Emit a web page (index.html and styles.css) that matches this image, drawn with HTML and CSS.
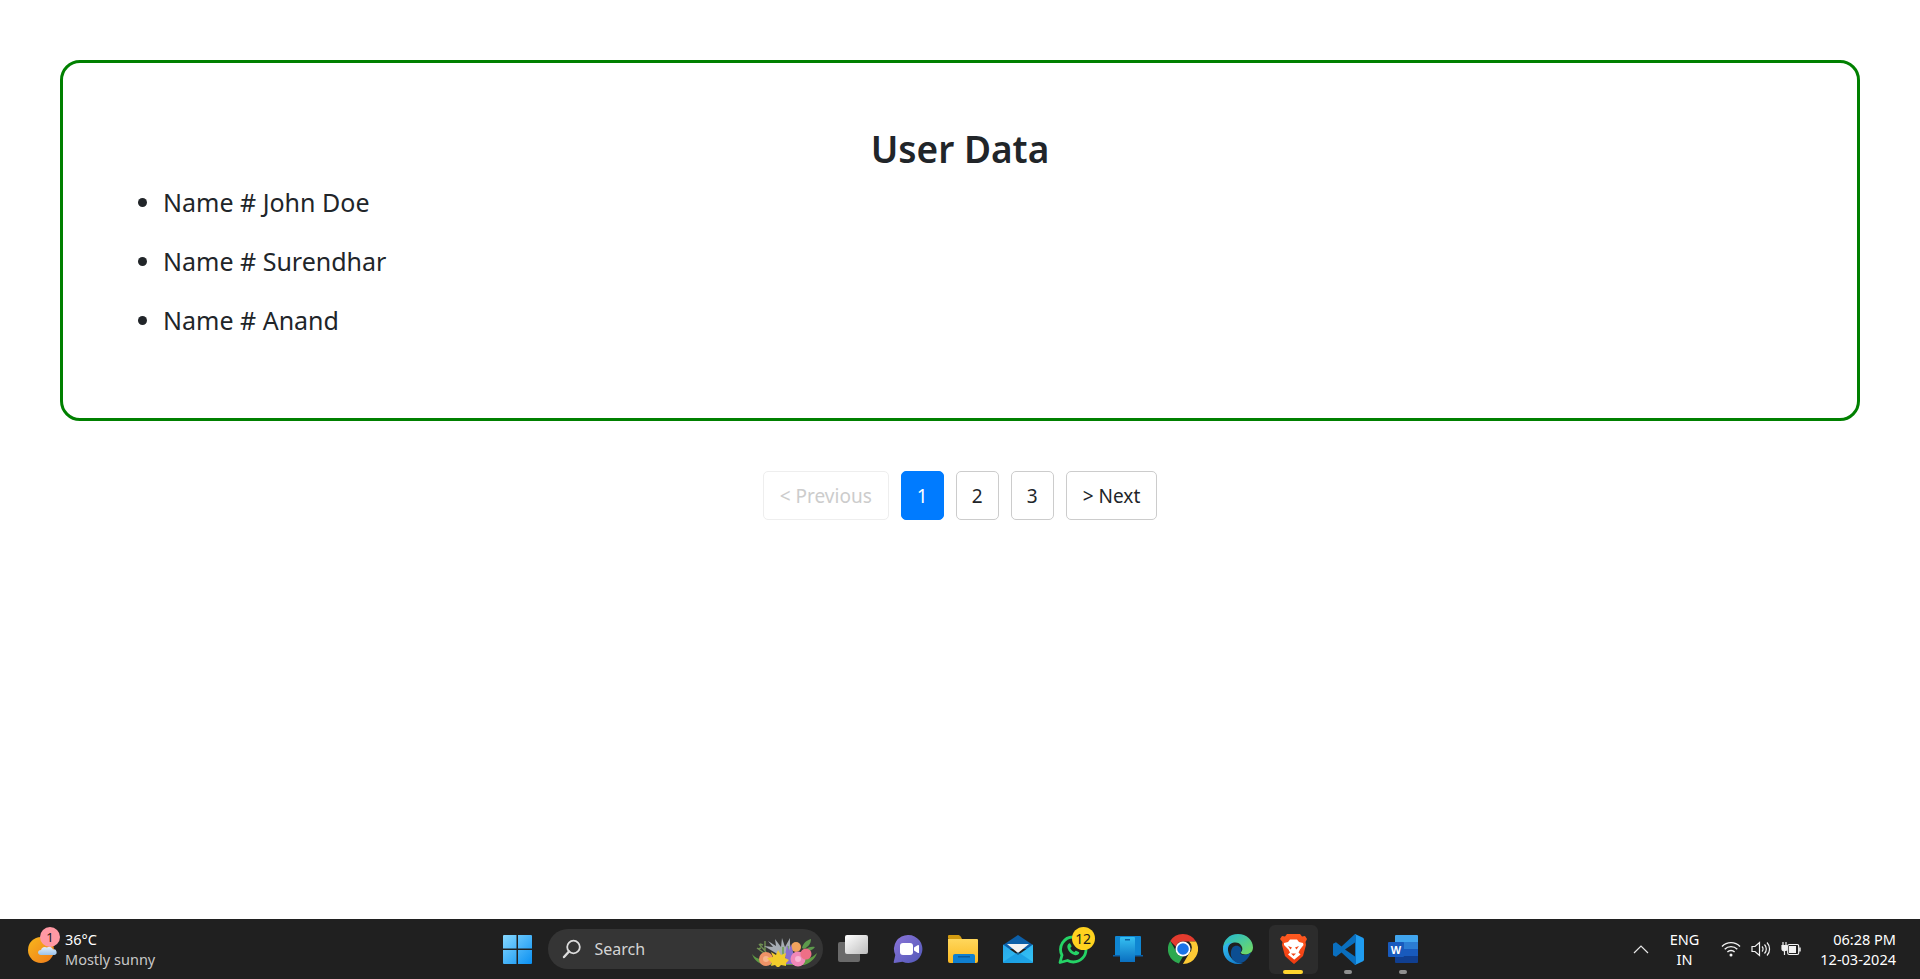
FILE: index.html
```html
<!DOCTYPE html>
<html lang="en">
<head>
    <meta charset="UTF-8">
    <meta name="viewport" content="width=device-width, initial-scale=1.0">
    <title>User Data</title>
    <link rel="stylesheet" href="styles.css">
</head>
<body>
    <main class="page">
        <section class="card">
            <h2>User Data</h2>
            <ul class="user-list">
                <li>Name # John Doe</li>
                <li>Name # Surendhar</li>
                <li>Name # Anand</li>
            </ul>
        </section>
        <nav class="pagination">
            <a class="page-btn wide disabled">&lt; Previous</a>
            <a class="page-btn active">1</a>
            <a class="page-btn">2</a>
            <a class="page-btn">3</a>
            <a class="page-btn wide">&gt; Next</a>
        </nav>
    </main>

    <footer class="taskbar">
        <div class="weather">
            <div class="weather-icon">
                <svg width="30" height="30" viewBox="0 0 30 30">
                    <defs>
                        <linearGradient id="sun" x1="0" y1="0" x2="1" y2="1"><stop offset="0" stop-color="#f9b81c"/><stop offset="1" stop-color="#ee7a1c"/></linearGradient>
                        <linearGradient id="cloud" x1="0" y1="0" x2="0" y2="1"><stop offset="0" stop-color="#e4effa"/><stop offset="1" stop-color="#9cc3ec"/></linearGradient>
                    </defs>
                    <circle cx="13" cy="16" r="13" fill="url(#sun)"/>
                    <path d="M10 19a3 3 0 0 1 3-3 4 4 0 0 1 6-2.500 4 4 0 0 1 6 2 2.800 2.800 0 0 1 1.500 5.500H13a3 3 0 0 1-3-2z" fill="url(#cloud)"/>
                </svg>
                <span class="weather-badge">1</span>
            </div>
            <div class="weather-text">
                <span class="temp">36°C</span>
                <span class="cond">Mostly sunny</span>
            </div>
        </div>

        <div class="apps">
            <div class="slot">
                <svg width="29" height="29" viewBox="0 0 29 29">
                    <defs>
                        <linearGradient id="win" x1="0" y1="0" x2="1" y2="1"><stop offset="0" stop-color="#86d8ff"/><stop offset="1" stop-color="#0a90f2"/></linearGradient>
                    </defs>
                    <path d="M1 0h12.500v13.500H0V1a1 1 0 0 1 1-1zM15 0h13a1 1 0 0 1 1 1v12.500H15zM0 15h13.500v14H1a1 1 0 0 1-1-1zM15 15h14v13a1 1 0 0 1-1 1H15z" fill="url(#win)"/>
                </svg>
            </div>
            <div class="search-wrap">
                <div class="search">
                    <svg class="search-icon" width="20" height="20" viewBox="0 0 20 20" fill="none">
                        <circle cx="11.500" cy="8" r="6.300" stroke="#dcdcdc" stroke-width="1.800"/>
                        <path d="M7 12.500 2 18" stroke="#dcdcdc" stroke-width="2.400" stroke-linecap="round"/>
                    </svg>
                    <span class="search-label">Search</span>
                    <svg class="flowers" width="66" height="32" viewBox="0 0 66 32">
                        <path d="M0 19c2 6 6 9 12 11h40c6-2 11-6 13-12-3 3-6 5-10 6l-44 1c-5-1-9-3-11-6z" fill="#5f9a44"/>
                        <path d="M5 13l7 5M7 9l7 8M13 6l0 10M9 13l-3 1M11 10l-3-1" stroke="#6f8f52" stroke-width="1.400" fill="none"/>
                        <path d="M27 20 12 11l9 1-5-6 8 5-1-7 6 8 1-9 3 9 5-9 0 10 5-4-7 11z" fill="#a6acb3"/>
                        <path d="M31 20V12M36 20V11" stroke="#6aa04c" stroke-width="1.500"/>
                        <path d="M50 13c1-5 5-8 9-9 0 5-3 8-7 10zM53 15c3-3 7-4 10-3-2 3-6 4-9 5z" fill="#5d9a4c"/>
                        <circle cx="44" cy="12" r="5" fill="#f0a35e"/>
                        <path d="M33 21l2-11 2 6 2-7 2 8 2 4-2 8h-7z" fill="#8a6fd0"/>
                        <circle cx="14" cy="24" r="7" fill="#ef9367"/>
                        <circle cx="14" cy="24" r="3" fill="#f6b58e"/>
                        <path d="M15 23l6-1-2-5 5 3 2-5 3 5 5-2-1 5 4 2-3 3 0 3-5-1-3 3-3-3-4 1 1-3z" fill="#f2cc2c"/>
                        <circle cx="46" cy="24" r="7.500" fill="#f088b8"/>
                        <circle cx="46" cy="24" r="3" fill="#f8b6d4"/>
                        <circle cx="54" cy="19" r="5.500" fill="#ee6f86"/>
                    </svg>
                </div>
            </div>
            <div class="slot">
                <svg width="30" height="28" viewBox="0 0 30 28">
                    <defs>
                        <linearGradient id="tv" x1="0" y1="0" x2="1" y2="1"><stop offset="0" stop-color="#ffffff"/><stop offset="1" stop-color="#bdbdbd"/></linearGradient>
                    </defs>
                    <rect x="0" y="7" width="22" height="20" rx="2" fill="#6a6a6a"/>
                    <rect x="7" y="0" width="23" height="19" rx="2" fill="url(#tv)"/>
                </svg>
            </div>
            <div class="slot">
                <svg width="30" height="30" viewBox="0 0 30 30">
                    <defs>
                        <linearGradient id="chat" x1="0" y1="0" x2="1" y2="1"><stop offset="0" stop-color="#8b74d8"/><stop offset="1" stop-color="#5158b8"/></linearGradient>
                    </defs>
                    <path d="M15.500 1a14 14 0 1 1-6 26.700L1.500 29c-.7 0-1-.4-.8-1l1.600-7A14 14 0 0 1 15.500 1z" fill="url(#chat)"/>
                    <rect x="7" y="9" width="13" height="12" rx="3" fill="#fff"/>
                    <path d="M21 13.500l4-2.500c.5-.3 1 0 1 .5v7c0 .5-.5.800-1 .5l-4-2.500z" fill="#fff"/>
                </svg>
            </div>
            <div class="slot">
                <svg width="30" height="28" viewBox="0 0 30 28">
                    <defs>
                        <linearGradient id="fold" x1="0" y1="0" x2="0" y2="1"><stop offset="0" stop-color="#ffd75c"/><stop offset="1" stop-color="#fbb921"/></linearGradient>
                    </defs>
                    <path d="M1 0h9c1 0 2 .5 3 2l1 2H1a1 1 0 0 1-1-1V1a1 1 0 0 1 1-1z" fill="#d39b10"/>
                    <path d="M0 4h29a1 1 0 0 1 1 1v21a2 2 0 0 1-2 2H2a2 2 0 0 1-2-2z" fill="url(#fold)"/>
                    <path d="M5 28v-7a2 2 0 0 1 2-2h18a2 2 0 0 1 2 2v7z" fill="#0f7fd0"/>
                    <rect x="10" y="21" width="12" height="1.500" fill="#0b5b9c"/>
                </svg>
            </div>
            <div class="slot">
                <svg width="30" height="28" viewBox="0 0 30 28">
                    <defs>
                        <linearGradient id="env" x1="0" y1="0" x2="1" y2="1"><stop offset="0" stop-color="#27a8ea"/><stop offset="1" stop-color="#35c4f5"/></linearGradient>
                    </defs>
                    <path d="M0 10 15 0l15 10v4H0z" fill="#0c5fa8"/>
                    <path d="M4 9h22l-11 9z" fill="#f2f2f2"/>
                    <path d="M0 9.500 15 20 30 9.500V27a1 1 0 0 1-1 1H1a1 1 0 0 1-1-1z" fill="url(#env)"/>
                    <path d="M0 27 15 17 30 27v0a1 1 0 0 1-1 1H1a1 1 0 0 1-1-1z" fill="#1091dc" opacity=".6"/>
                </svg>
            </div>
            <div class="slot">
                <svg width="30" height="30" viewBox="0 0 30 30" fill="none">
                    <path d="M15.500 3A12.500 12.500 0 0 1 15.500 28a12.500 12.500 0 0 1-6-1.500L2 28.500l2-7.300A12.500 12.500 0 0 1 15.500 3z" stroke="#25d366" stroke-width="2.800" stroke-linejoin="round"/>
                    <path d="M11 9.500c-1.500 1-2 2.500-1.500 4.500 1 3.500 3.500 6 7 7 2 .5 3.500 0 4.500-1.500.4-.6.300-1-.3-1.400l-2.200-1.200c-.5-.3-.9-.2-1.200.2l-.8 1c-2-.7-3.500-2.300-4.300-4.200l1-.8c.4-.4.500-.8.200-1.300l-1.200-2.200c-.4-.5-.8-.5-1.200-.1z" fill="#25d366"/>
                </svg>
                <span class="count-badge">12</span>
            </div>
            <div class="slot">
                <svg width="30" height="26" viewBox="0 0 30 26">
                    <defs>
                        <linearGradient id="ph" x1="0" y1="0" x2="0" y2="1"><stop offset="0" stop-color="#35c0f2"/><stop offset="1" stop-color="#0a6fc0"/></linearGradient>
                    </defs>
                    <path d="M3 0h24a1 1 0 0 1 1 1v18H2V1a1 1 0 0 1 1-1z" fill="#0f86d2"/>
                    <rect x="0" y="19" width="30" height="1.500" fill="#0a5fa8"/>
                    <path d="M8 1h13a1 1 0 0 1 1 1v24H7V2a1 1 0 0 1 1-1z" fill="url(#ph)"/>
                    <rect x="12" y="3" width="5" height="1.500" fill="#0b5fa0"/>
                </svg>
            </div>
            <div class="slot">
                <svg width="30" height="30" viewBox="0 0 30 30">
                    <path d="M15 0a15 15 0 0 1 13 7.500H15a7.500 7.500 0 0 0-7.100 5.300L2.200 7A15 15 0 0 1 15 0z" fill="#e33b2e"/>
                    <path d="M2.200 7l6 10.500a7.500 7.500 0 0 0 6.800 5l-4.100 7A15 15 0 0 1 2.200 7z" fill="#2da94f"/>
                    <path d="M28 7.500A15 15 0 0 1 15 30h-.1l6.400-11A7.500 7.500 0 0 0 21 7.500z" fill="#fcc934"/>
                    <circle cx="15" cy="15" r="7.500" fill="#fff"/>
                    <circle cx="15" cy="15" r="5.800" fill="#1a73e8"/>
                </svg>
            </div>
            <div class="slot">
                <svg width="30" height="30" viewBox="0 0 30 30">
                    <defs>
                        <linearGradient id="edge1" x1="0" y1="0" x2="1" y2="1"><stop offset="0" stop-color="#35c1f1"/><stop offset="1" stop-color="#0b6fc4"/></linearGradient>
                        <linearGradient id="edge2" x1="0" y1="0" x2="1" y2="1"><stop offset="0" stop-color="#1fb8d8"/><stop offset="1" stop-color="#77dc5a"/></linearGradient>
                    </defs>
                    <path d="M15 0c8.500 0 15 6 15 13.500 0 4.500-3.500 7-7.500 7-2.500 0-4.500-.8-5-2 2-1.500 2.500-4 1-6.500C17 9 14 8 11 8.500 6 9.500 1.500 11 0 15 0 6 6.500 0 15 0z" fill="url(#edge2)"/>
                    <path d="M0 15c0-4.500 5-7 9.500-6.500C6 10 4.500 13 5 16.500 6 24 13 30 20 29a15 15 0 0 1-5 1C6.500 30 0 23.500 0 15z" fill="url(#edge1)"/>
                    <path d="M9.500 13.500c2-2.500 6-2.500 8 0 1.500 2 1 4-.5 5.500 1 2 4 2.500 7 1.500 1.500-.5 3-1.500 4-2.500-2 6-6 10.500-11 11-4 .5-8-3-9-7.500-.5-3 0-6 1.500-8z" fill="#0c4e92"/>
                </svg>
            </div>
            <div class="slot current">
                <svg width="27" height="30" viewBox="0 0 27 30">
                    <defs>
                        <linearGradient id="brave" x1="0" y1="0" x2="0" y2="1"><stop offset="0" stop-color="#ff5a20"/><stop offset="1" stop-color="#f03a10"/></linearGradient>
                    </defs>
                    <path d="M7 0h13l2 2.500 3-.5 2 3-1.500 3 .5 3-3 11-6 5.500-3 2.500-3-2.500-6-5.500-3-11 .5-3L0 5l2-3 3 .5z" fill="url(#brave)"/>
                    <path d="M4 9l4-1 2-2.500h7l2 2.500 4 1 .5 2-3.500 4.500-1.500 3 2 2-5.500 4.500-.5.500h-.5l-.5-.5L8 20.500l2-2-1.500-3L4 11z" fill="#fff"/>
                    <path d="M8 12l4 1.500-1.500 2zM19 12l-4 1.500 1.500 2zM11 19.500h5l-2.500 2.500z" fill="#f2481a"/>
                </svg>
                <span class="indicator open"></span>
            </div>
            <div class="slot">
                <svg width="31" height="31" viewBox="0 0 31 31">
                    <path d="M22 0l8 3.800c.6.300 1 .9 1 1.600v20.200c0 .7-.4 1.300-1 1.600L22 31z" fill="#1f9cf0"/>
                    <path d="M22 0 8.500 12.500 3 8.300l-3 1.500v11.400l3 1.500 5.500-4.200L22 31l1-1V1zM22 8.500 12 15.500 22 22.500z" fill="#0a6fbf" fill-rule="evenodd"/>
                </svg>
                <span class="indicator"></span>
            </div>
            <div class="slot">
                <svg width="30" height="28" viewBox="0 0 30 28">
                    <path d="M8 0h21a1 1 0 0 1 1 1v6H7V1a1 1 0 0 1 1-1z" fill="#41a5ee"/>
                    <rect x="7" y="7" width="23" height="7" fill="#2b7cd3"/>
                    <rect x="7" y="14" width="23" height="7" fill="#185abd"/>
                    <path d="M7 21h23v6a1 1 0 0 1-1 1H8a1 1 0 0 1-1-1z" fill="#103f91"/>
                    <rect x="0" y="7" width="16" height="15" rx="1" fill="#185abd"/>
                    <text class="word-letter" x="8" y="19" text-anchor="middle">W</text>
                </svg>
                <span class="indicator"></span>
            </div>
        </div>

        <div class="tray">
            <svg class="chevron" width="16" height="9" viewBox="0 0 16 9" fill="none">
                <path d="M1 8l7-7 7 7" stroke="#e8e8e8" stroke-width="1.200"/>
            </svg>
            <div class="lang"><span>ENG</span><span>IN</span></div>
            <div class="status">
                <svg width="20" height="16" viewBox="0 0 20 16" fill="none" stroke="#f2f2f2" stroke-width="1.400">
                    <path d="M1 5.500a12.500 12.500 0 0 1 18 0M3.700 8.300a8.700 8.700 0 0 1 12.600 0M6.400 11a5 5 0 0 1 7.200 0"/>
                    <circle cx="10" cy="14" r="1.500" fill="#f2f2f2" stroke="none"/>
                </svg>
                <svg width="20" height="16" viewBox="0 0 20 16" fill="none" stroke="#f2f2f2" stroke-width="1.200">
                    <path d="M1 5.500h3L8.500 1.500v13L4 10.500H1z"/>
                    <path d="M11 5.500a3.500 3.500 0 0 1 0 5M13.500 3.500a6.500 6.500 0 0 1 0 9M16 1.500a9.500 9.500 0 0 1 0 13"/>
                </svg>
                <svg width="20" height="16" viewBox="0 0 20 16" fill="none">
                    <rect x="6.700" y="3.500" width="11" height="10" rx="1.500" stroke="#f2f2f2" stroke-width="1.200"/>
                    <rect x="8" y="5" width="7" height="7" fill="#f2f2f2"/>
                    <rect x="18.200" y="6.500" width="1.500" height="4" fill="#f2f2f2"/>
                    <path d="M1 4.500h5v3a2 2 0 0 1-2 2 2 2 0 0 1-3-2zM2 1v3M5 1v3M3.500 9v5" stroke="#f2f2f2" stroke-width="1.200" fill="#f2f2f2"/>
                </svg>
            </div>
            <div class="clock"><span>06:28 PM</span><span>12-03-2024</span></div>
        </div>
    </footer>
</body>
</html>
```

FILE: styles.css
```css
* {
    box-sizing: border-box;
}
body {
    margin: 0;
    height: 100vh;
    display: flex;
    flex-direction: column;
    overflow: hidden;
    font-family: "Noto Sans", "Open Sans", sans-serif;
    color: #212529;
    background-color: #fff;
}
.page {
    flex: 1;
    padding: 60px 60px 0;
}
.card {
    height: 361px;
    padding: 67px 40px 0;
    border: 3px solid green;
    border-radius: 20px;
}
h2 {
    margin: 0 0 16px;
    font-size: 37px;
    font-weight: 600;
    line-height: 38px;
    text-align: center;
}
.user-list {
    margin: 0;
    padding-left: 60px;
    font-size: 25px;
    line-height: 36px;
}
.user-list li {
    margin-bottom: 23px;
}
.pagination {
    display: flex;
    justify-content: center;
    gap: 12px;
    margin-top: 50px;
}
.page-btn {
    display: flex;
    align-items: center;
    justify-content: center;
    width: 43px;
    height: 49px;
    border: 1px solid #ccc;
    border-radius: 5px;
    font-size: 19px;
}
.page-btn.wide {
    width: auto;
    padding: 0 16px;
}
.page-btn.active {
    background-color: #007bff;
    border-color: #007bff;
    color: #fff;
}
.page-btn.disabled {
    color: #ccc;
    border-color: #eee;
}
.taskbar {
    flex: none;
    height: 60px;
    display: grid;
    grid-template-columns: 1fr auto 1fr;
    align-items: center;
    background-color: #202020;
    color: #fff;
    font-size: 14.500px;
}
.weather {
    display: flex;
    align-items: center;
    padding-left: 28px;
    gap: 7px;
}
.weather-icon {
    position: relative;
    width: 30px;
    height: 30px;
}
.weather-badge {
    position: absolute;
    top: -7px;
    left: 12px;
    width: 20px;
    height: 20px;
    border-radius: 50%;
    background-color: #ff99a4;
    color: #1a1a1a;
    font-size: 13px;
    line-height: 20px;
    text-align: center;
}
.weather-text {
    display: flex;
    flex-direction: column;
    line-height: 20px;
}
.cond {
    color: #c8c8c8;
}
.apps {
    display: flex;
    align-items: center;
}
.slot {
    position: relative;
    width: 55px;
    height: 49px;
    display: flex;
    align-items: center;
    justify-content: center;
}
.slot.current {
    background-color: #2c2c2c;
    border-radius: 6px;
    width: 49px;
    margin: 0 3px;
}
.indicator {
    position: absolute;
    bottom: 0;
    left: 50%;
    width: 8px;
    height: 4px;
    margin-left: -4px;
    border-radius: 2px;
    background-color: #8f8f8f;
}
.indicator.open {
    width: 20px;
    margin-left: -10px;
    background-color: #ffd52e;
}
.count-badge {
    position: absolute;
    top: 2px;
    left: 26px;
    width: 23px;
    height: 23px;
    border-radius: 50%;
    background-color: #ffd21f;
    color: #1a1a1a;
    font-size: 14px;
    line-height: 23px;
    text-align: center;
    letter-spacing: -0.3px;
}
.search-wrap {
    width: 281px;
    padding: 0 3px;
}
.search {
    position: relative;
    height: 40px;
    display: flex;
    align-items: center;
    gap: 13px;
    padding-left: 14px;
    border-radius: 20px;
    background-color: #353535;
}
.search-label {
    color: #d4d4d4;
    font-size: 16px;
}
.flowers {
    position: absolute;
    right: 5px;
    top: 6px;
}
.word-letter {
    fill: #fff;
    font-family: "Liberation Sans", sans-serif;
    font-size: 11px;
    font-weight: 700;
}
.tray {
    display: flex;
    align-items: center;
    justify-content: flex-end;
    padding-right: 24px;
}
.chevron {
    margin-right: 21px;
}
.lang {
    display: flex;
    flex-direction: column;
    align-items: center;
    line-height: 20px;
    margin-right: 22px;
}
.status {
    display: flex;
    gap: 10px;
    margin-right: 19px;
}
.clock {
    display: flex;
    flex-direction: column;
    align-items: flex-end;
    line-height: 20px;
}
```
